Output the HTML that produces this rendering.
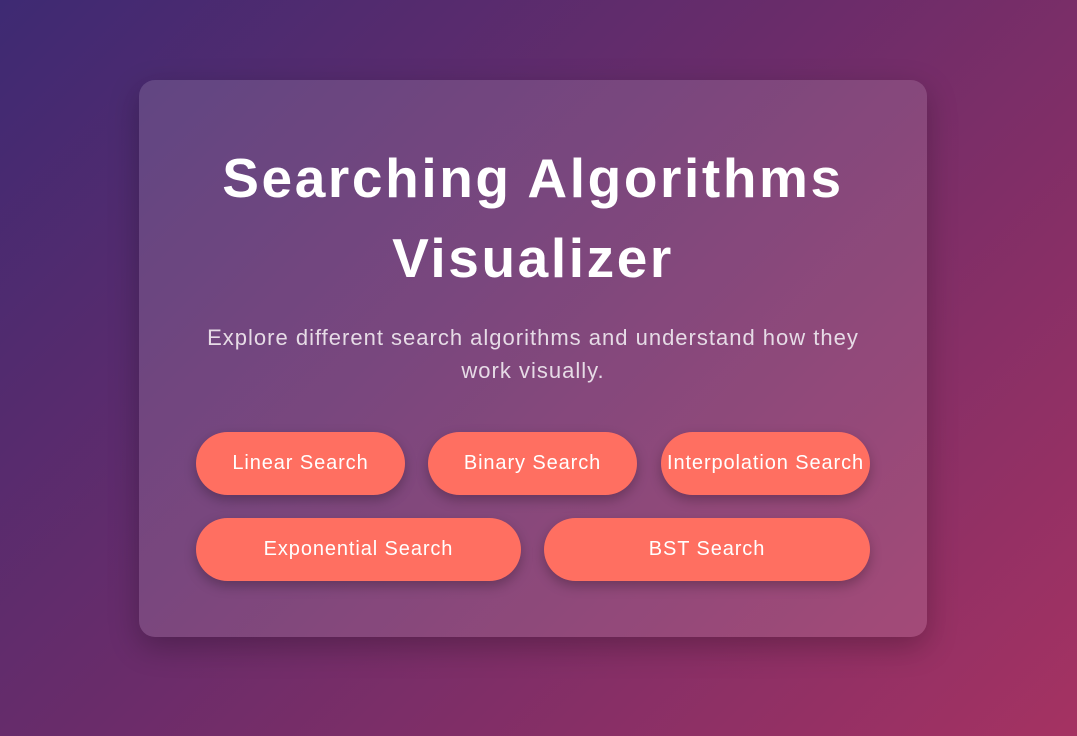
<!DOCTYPE html>
<html><head><meta charset="utf-8"><style>
html,body{margin:0;padding:0;width:1077px;height:736px;overflow:hidden}
body{background:linear-gradient(135deg,#3e2a73 0%,#6a2c6a 45%,#a53262 100%);font-family:"Liberation Sans",sans-serif;position:relative}
.card{position:absolute;left:139px;top:80px;width:788px;height:557px;border-radius:16px;background:rgba(255,255,255,0.13);box-shadow:0 10px 30px rgba(0,0,0,0.25)}
h1{position:absolute;left:139px;width:788px;top:138px;margin:0;text-align:center;color:#fff;font-size:55px;font-weight:bold;line-height:80px;letter-spacing:2.6px}
p{position:absolute;left:139px;width:788px;top:321px;margin:0;text-align:center;color:#e6dbe6;font-size:22px;line-height:33px;letter-spacing:1px}
.b{position:absolute;height:63px;border-radius:32px;background:#ff6f61;color:#fff;font-size:20px;letter-spacing:0.9px;display:flex;align-items:center;justify-content:center;box-shadow:0 5px 12px rgba(0,0,0,0.25);white-space:nowrap}
</style></head><body>
<div class="card"></div>
<h1>Searching Algorithms<br>Visualizer</h1>
<p>Explore different search algorithms and understand how they<br>work visually.</p>
<div class="b" style="left:196px;top:432px;width:209px">Linear Search</div>
<div class="b" style="left:428px;top:432px;width:209px">Binary Search</div>
<div class="b" style="left:661px;top:432px;width:209px">Interpolation Search</div>
<div class="b" style="left:196px;top:518px;width:325px">Exponential Search</div>
<div class="b" style="left:544px;top:518px;width:326px">BST Search</div>
</body></html>
